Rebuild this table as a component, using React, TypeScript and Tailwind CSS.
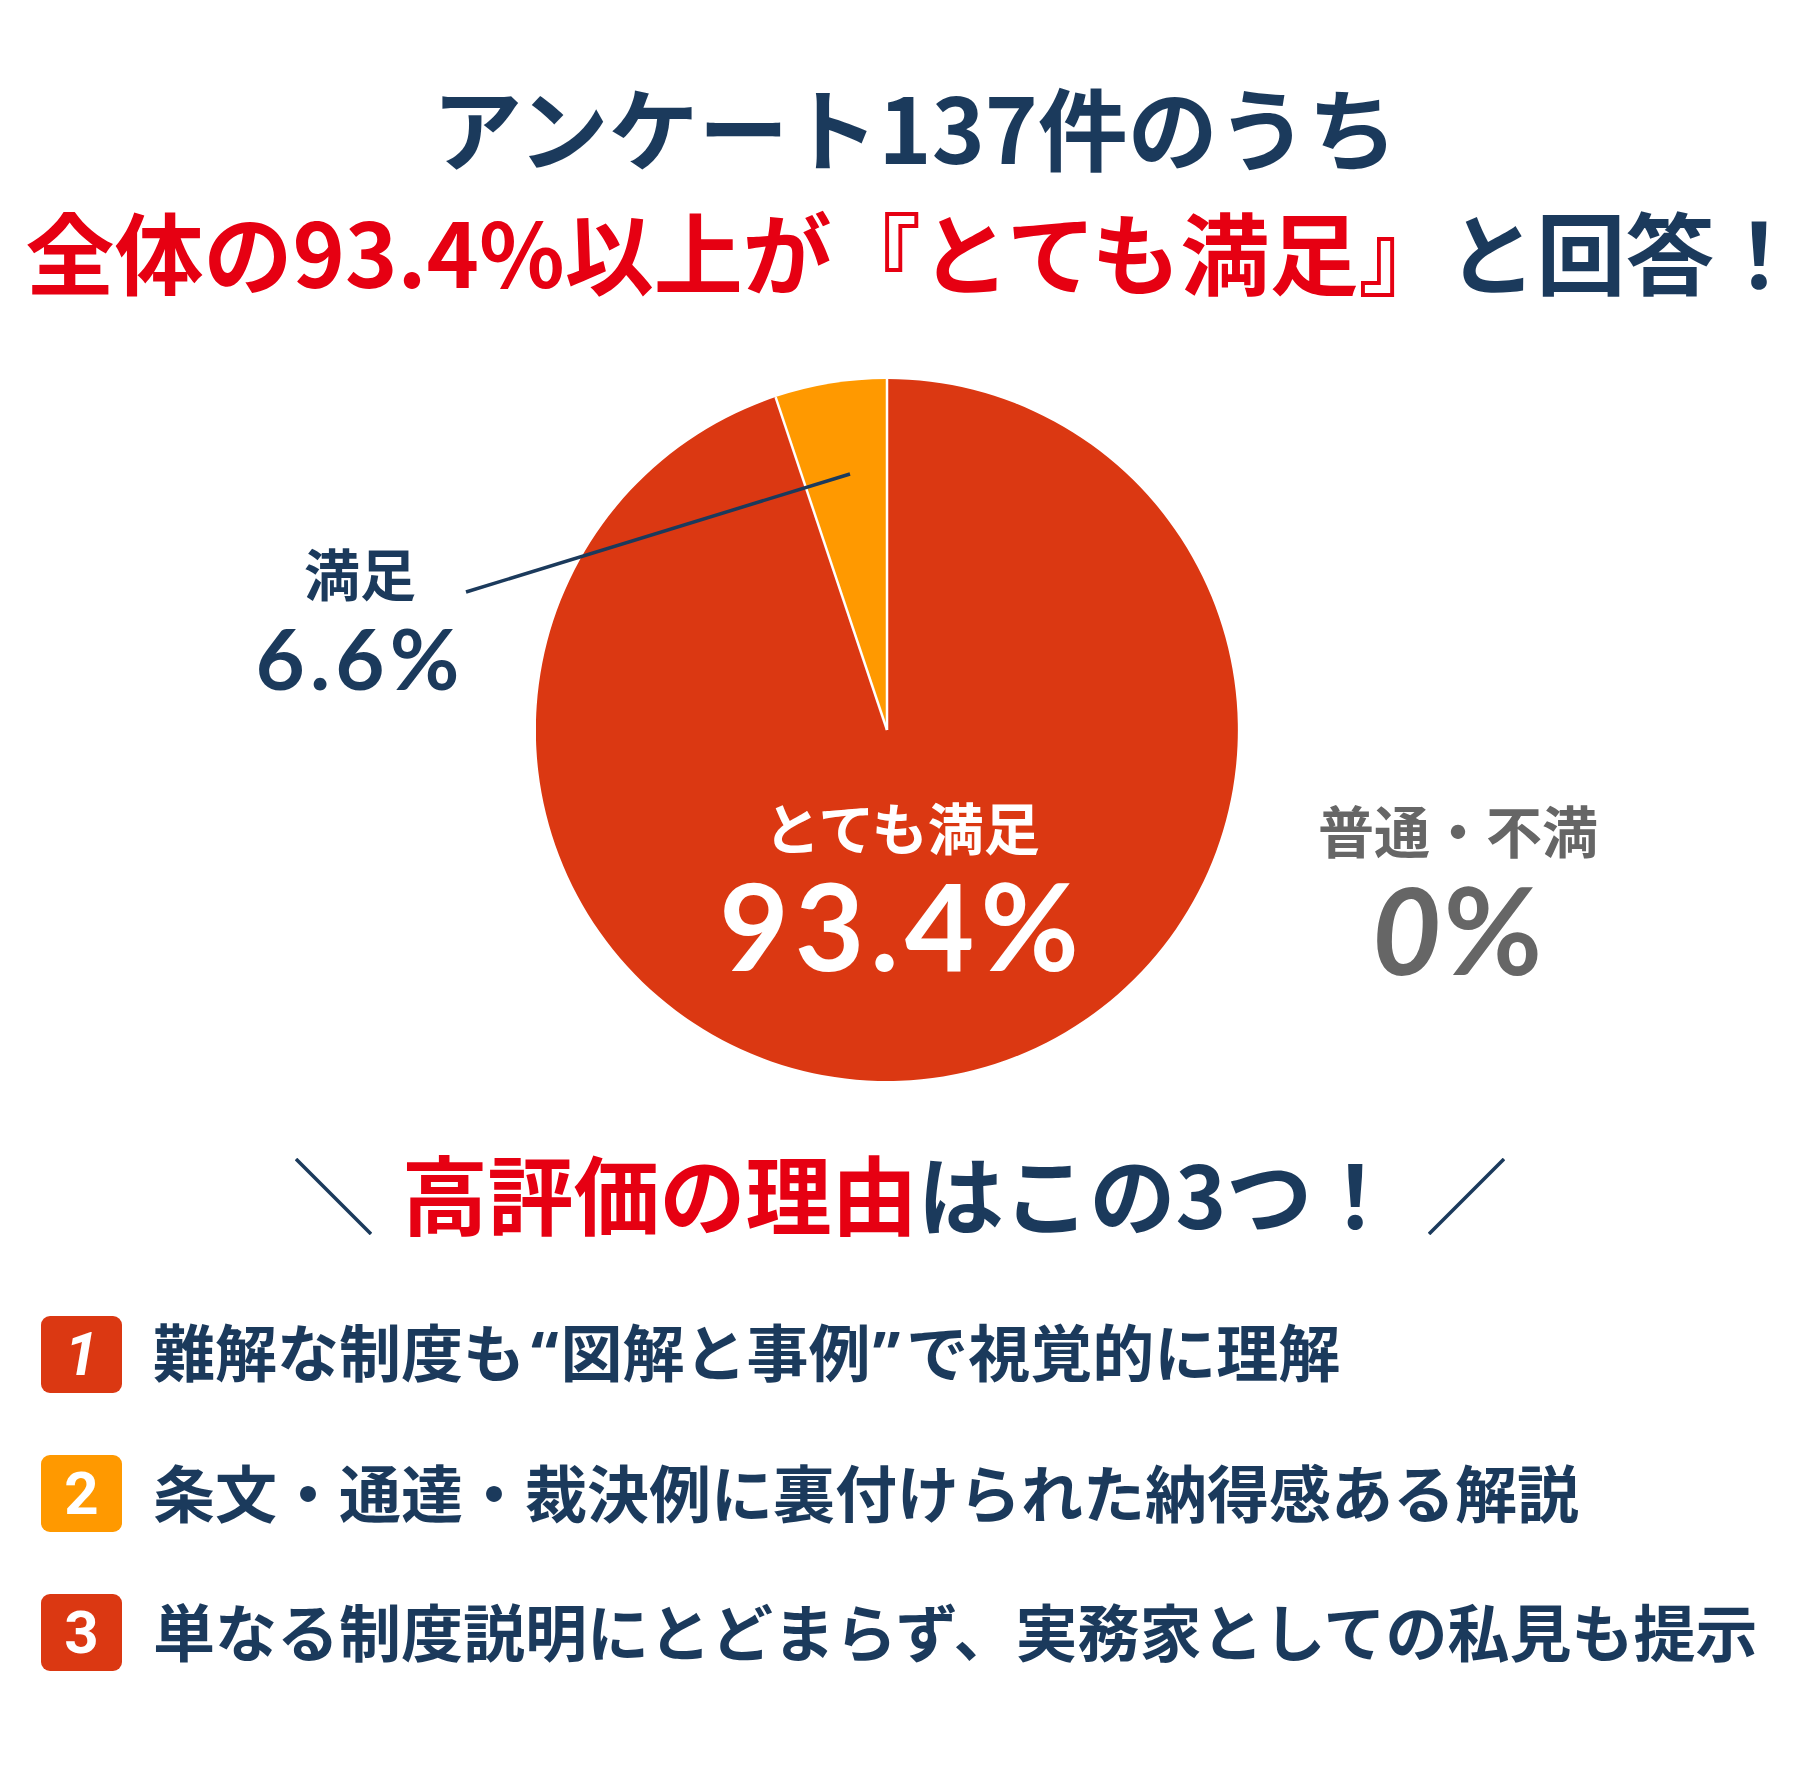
import React from 'react';

const NAVY = '#1b3a5c';

const jp = { fontFamily: '"Noto Sans CJK JP", "Noto Sans", sans-serif' };
const num = { fontFamily: 'Lato, "Noto Sans", sans-serif' };
const latin = { fontFamily: '"Noto Sans", sans-serif' };

const reasons = [
  {
    n: '1',
    color: 'bg-[#db3812]',
    text: (
      <>
        難解な制度も<span className="pl-[6px] pr-[2px]" style={latin}>“</span>図解と事例<span className="pl-[2px] pr-[6px]" style={latin}>”</span>で視覚的に理解
      </>
    ),
  },
  { n: '2', color: 'bg-[#ff9900]', text: <>条文・通達・裁決例に裏付けられた納得感ある解説</> },
  { n: '3', color: 'bg-[#db3812]', text: <>単なる制度説明にとどまらず、実務家としての私見も提示</> },
];

// 6.6% slice measured at ~18.5deg in the artwork
const Pie: React.FC = () => (
  <svg width="702" height="702" viewBox="0 0 702 702" className="absolute left-[536px] top-[85px]">
    <path d="M351 351 L351 0 A351 351 0 1 1 239.6 18.1 Z" fill="#db3812" />
    <path d="M351 351 L239.6 18.1 A351 351 0 0 1 351 0 Z" fill="#ff9900" />
    <line x1="351" y1="351" x2="351" y2="0" stroke="#fff" strokeWidth="2.5" />
    <line x1="351" y1="351" x2="239.6" y2="18.1" stroke="#fff" strokeWidth="2.5" />
  </svg>
);

export default function App() {
  return (
    <div className="w-[1800px] h-[1775px] bg-white overflow-hidden" style={jp}>
      {/* heading */}
      <div className="flex flex-col items-center pt-[80px] pl-[30px] font-bold whitespace-nowrap">
        <div className="text-[90px] leading-none text-[#1b3a5c]">アンケート137件のうち</div>
        <div className="mt-[35px] mr-[40px] text-[89px] leading-none text-[#e60012]">
          全体の93.4%以上が『とても満足』
          <span className="text-[#1b3a5c]">
            と回答<span className="inline-block w-[50px]">！</span>
          </span>
        </div>
      </div>

      {/* chart */}
      <div className="relative h-[855px] w-full font-bold">
        <Pie />
        <svg width="1800" height="855" className="absolute left-0 top-0 pointer-events-none">
          <line x1="466" y1="298" x2="850" y2="180" stroke={NAVY} strokeWidth="3.5" />
        </svg>

        <div className="absolute left-[210px] top-[250px] w-[300px] flex flex-col items-center gap-[23px] text-[#1b3a5c]">
          <div className="text-[56px] leading-none">満足</div>
          <div className="text-[85px] leading-[0.8] tracking-[0.06em]" style={num}>6.6%</div>
        </div>

        <div className="absolute left-[702px] top-[504px] w-[400px] flex flex-col items-center gap-[23px] text-white">
          <div className="text-[56px] leading-none">とても満足</div>
          <div className="text-[120px] leading-[0.8] tracking-[0.05em]" style={num}>93.4%</div>
        </div>

        <div className="absolute left-[1258px] top-[507px] w-[400px] flex flex-col items-center gap-[24px] text-[#666666]">
          <div className="text-[56px] leading-none">普通・不満</div>
          <div className="text-[120px] leading-[0.8] tracking-[0.02em]" style={num}>
            <span className="italic">0</span>%
          </div>
        </div>
      </div>

      {/* reasons title */}
      <div className="flex items-center justify-center gap-[30px] h-[86px]">
        <svg width="77" height="77" viewBox="0 0 77 77" className="self-end">
          <line x1="1" y1="1" x2="76" y2="76" stroke={NAVY} strokeWidth="3.5" />
        </svg>
        <div className="text-[86px] leading-none font-bold whitespace-nowrap text-[#1b3a5c]">
          <span className="text-[#e60012]">高評価の理由</span>はこの3つ！
        </div>
        <svg width="77" height="77" viewBox="0 0 77 77" className="self-end">
          <line x1="76" y1="1" x2="1" y2="76" stroke={NAVY} strokeWidth="3.5" />
        </svg>
      </div>

      {/* reasons list */}
      <div className="flex flex-col gap-[62px] pl-[41px] mt-[81px]">
        {reasons.map((r) => (
          <div key={r.n} className="flex items-center gap-[31px] h-[77px]">
            <div
              className={`${r.color} w-[81px] h-[77px] rounded-[9px] flex items-center justify-center text-white text-[60px] font-bold leading-none`}
              style={{ fontFamily: 'Roboto, sans-serif' }}
            >
              <span className={r.n === '1' ? 'italic' : ''}>{r.n}</span>
            </div>
            <div className="text-[62px] leading-none font-bold whitespace-nowrap text-[#1b3a5c] mb-[6px]">{r.text}</div>
          </div>
        ))}
      </div>
    </div>
  );
}
